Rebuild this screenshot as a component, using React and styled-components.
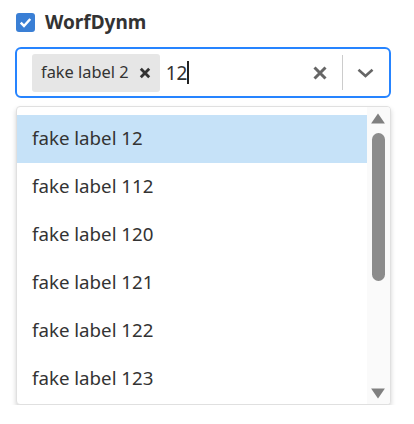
import React, { useState } from "react";
import styled, { createGlobalStyle } from "styled-components";

const GlobalStyle = createGlobalStyle`
  body {
    margin: 0;
    background: #ffffff;
    font-family: "Noto Sans", "Open Sans", sans-serif;
    color: #333333;
  }
`;

const options = [
  "fake label 12",
  "fake label 112",
  "fake label 120",
  "fake label 121",
  "fake label 122",
  "fake label 123",
  "fake label 124",
  "fake label 125",
  "fake label 126",
  "fake label 127",
  "fake label 128",
  "fake label 129",
];

const App = () => {
  const [active, setActive] = useState(0);

  return (
    <>
      <GlobalStyle />
      <Wrapper>
        <Header>
          <CheckBox>
            <svg width="13" height="13" viewBox="0 0 12 12">
              <path d="M1.6 6.2 L4.6 9.2 L10.4 2.8" fill="none" stroke="#fff" strokeWidth="2.3" />
            </svg>
          </CheckBox>
          <Label>WorfDynm</Label>
        </Header>

        <Control>
          <ValueArea>
            <Chip>
              <ChipText>fake label 2</ChipText>
              <ChipRemove>
                <svg width="12" height="12" viewBox="0 0 12 12">
                  <path d="M1.8 1.8 L10.2 10.2 M10.2 1.8 L1.8 10.2" stroke="#333" strokeWidth="2.8" />
                </svg>
              </ChipRemove>
            </Chip>
            <Input>12<Caret /></Input>
          </ValueArea>
          <Indicators>
            <IconButton>
              <svg width="14" height="14" viewBox="0 0 14 14">
                <path d="M1.5 1.5 L12.5 12.5 M12.5 1.5 L1.5 12.5" stroke="#666" strokeWidth="3" />
              </svg>
            </IconButton>
            <Separator />
            <IconButton>
              <svg width="17" height="10" viewBox="0 0 17 10">
                <path d="M1.5 1.8 L8.5 8 L15.5 1.8" fill="none" stroke="#666" strokeWidth="2.6" />
              </svg>
            </IconButton>
          </Indicators>
        </Control>

        <Menu>
          <MenuList>
            {options.slice(0, 6).map((o, i) => (
              <Option key={o} active={i === active} onMouseEnter={() => setActive(i)}>
                {o}
              </Option>
            ))}
          </MenuList>
          <ScrollBar>
            <Arrow>
              <svg width="14" height="11" viewBox="0 0 13 10">
                <path d="M6.5 0.3 L12.9 9.7 L0.1 9.7 Z" fill="#808080" />
              </svg>
            </Arrow>
            <Track>
              <Thumb style={{ height: `${(6 / options.length) * 296}px` }} />
            </Track>
            <Arrow>
              <svg width="14" height="11" viewBox="0 0 13 10">
                <path d="M0.1 0.3 L12.9 0.3 L6.5 9.7 Z" fill="#808080" />
              </svg>
            </Arrow>
          </ScrollBar>
        </Menu>
      </Wrapper>
    </>
  );
};

const Wrapper = styled.div`
  padding: 8px 23px 0 15px;
  width: 376px;
`;

const Header = styled.div`
  display: flex;
  align-items: center;
  gap: 10px;
  height: 29px;
  padding-left: 1px;
`;

const CheckBox = styled.span`
  flex: none;
  width: 19px;
  height: 19px;
  border-radius: 3px;
  background: #3a7fd5;
  display: flex;
  align-items: center;
  justify-content: center;
`;

const Label = styled.span`
  font-size: 19px;
  font-weight: 700;
  color: #333;
  padding-bottom: 2px;
`;

const Control = styled.div`
  margin-top: 10px;
  height: 51px;
  box-sizing: border-box;
  border: 2px solid #2684ff;
  border-radius: 6px;
  display: flex;
  align-items: center;
  background: #fff;
`;

const ValueArea = styled.div`
  flex: 1;
  display: flex;
  align-items: center;
  padding-left: 15px;
  gap: 6px;
`;

const Chip = styled.div`
  display: flex;
  align-items: center;
  height: 38px;
  background: #e6e6e6;
  border-radius: 3px;
  padding: 0 9px;
  gap: 10px;
`;

const ChipText = styled.span`
  font-size: 16.4px;
  color: #333;
  padding-bottom: 2px;
`;

const ChipRemove = styled.span`
  display: flex;
  align-items: center;
`;

const Input = styled.span`
  font-size: 19px;
  color: #333;
  display: flex;
  align-items: center;
`;

const Caret = styled.span`
  display: inline-block;
  width: 1.5px;
  height: 23px;
  background: #222;
`;

const Indicators = styled.div`
  display: flex;
  align-items: center;
  height: 100%;
  padding-right: 2px;
`;

const IconButton = styled.span`
  width: 44px;
  display: flex;
  align-items: center;
  justify-content: center;
`;

const Separator = styled.span`
  width: 1px;
  height: 35px;
  background: #cccccc;
`;

const Menu = styled.div`
  margin-top: 8px;
  margin-left: 1px;
  width: 375px;
  box-sizing: border-box;
  border: 1px solid #e0e0e0;
  border-radius: 4px;
  box-shadow: 0 3px 5px rgba(0, 0, 0, 0.18);
  background: #fff;
  overflow: hidden;
  display: flex;
  height: 299px;
`;

const MenuList = styled.div`
  flex: 1;
  overflow: hidden;
  padding: 8px 0;
`;

const Option = styled.div`
  height: 48px;
  box-sizing: border-box;
  display: flex;
  align-items: center;
  padding: 0 0 4px 15px;
  font-size: 18.7px;
  color: #333;
  background: ${(p) => (p.active ? "#c6e2f8" : "transparent")};
`;

const ScrollBar = styled.div`
  width: 23px;
  background: #fafafa;
  display: flex;
  flex-direction: column;
  align-items: center;
  padding: 6px 0 6px;
  box-sizing: border-box;
`;

const Arrow = styled.div`
  height: 10px;
  display: flex;
  align-items: center;
  justify-content: center;
  padding-right: 1px;
`;

const Track = styled.div`
  flex: 1;
  width: 100%;
  padding-top: 10px;
  display: flex;
  justify-content: center;
`;

const Thumb = styled.div`
  width: 13px;
  border-radius: 7px;
  background: #8c8c8c;
`;

export default App;
